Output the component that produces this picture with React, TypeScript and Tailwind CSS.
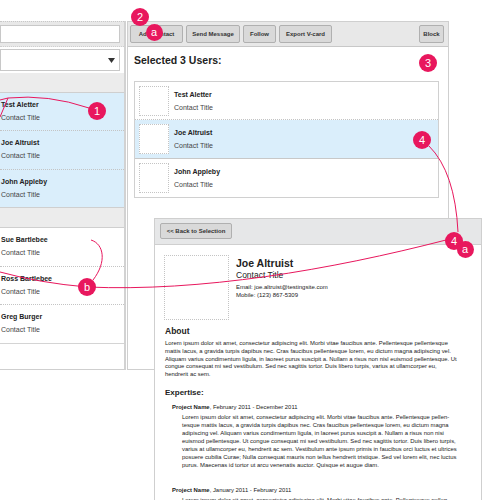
import React from "react";

const PINK = "#e8175d";

const aboutLines = [
  "Lorem ipsum dolor sit amet, consectetur adipiscing elit. Morbi vitae faucibus ante. Pellentesque pellentesque",
  "mattis lacus, a gravida turpis dapibus nec. Cras faucibus pellentesque lorem, eu dictum magna adipiscing vel.",
  "Aliquam varius condimentum ligula, in laoreet purus suscipit a. Nullam a risus non nisl euismod pellentesque. Ut",
  "congue consequat mi sed vestibulum. Sed nec sagittis tortor. Duis libero turpis, varius at ullamcorper eu,",
  "hendrerit ac sem.",
];

const projLines = [
  "Lorem ipsum dolor sit amet, consectetur adipiscing elit. Morbi vitae faucibus ante. Pellentesque pellen-",
  "tesque mattis lacus, a gravida turpis dapibus nec. Cras faucibus pellentesque lorem, eu dictum magna",
  "adipiscing vel. Aliquam varius condimentum ligula, in laoreet purus suscipit a. Nullam a risus non nisi",
  "euismod pellentesque. Ut congue consequat mi sed vestibulum. Sed nec sagittis tortor. Duis libero turpis,",
  "varius at ullamcorper eu, hendrerit ac sem. Vestibulum ante ipsum primis in faucibus orci luctus et ultrices",
  "posuere cubilia Curae; Nulla consequat mauris non tellus hendrerit tristique. Sed vel lorem elit, nec luctus",
  "purus. Maecenas id tortor ut arcu venenatis auctor. Quisque et augue diam.",
];

function LeftRow({ name, cls }: { name: string; cls: string }) {
  return (
    <div className={`pl-[1px] pt-[7px] border-b border-dotted border-[#c4c4c4] ${cls}`}>
      <div className="text-[7px] leading-[9px] font-bold text-[#222] whitespace-nowrap">{name}</div>
      <div className="mt-[4px] text-[7px] leading-[9px] text-[#444] whitespace-nowrap">Contact Title</div>
    </div>
  );
}

function SelRow({ name, cls }: { name: string; cls: string }) {
  return (
    <div className={`flex items-center pl-[4px] ${cls}`}>
      <div className="w-[30px] h-[30px] bg-white border border-dotted border-[#c4c4c4] shrink-0" />
      <div className="ml-[5px]">
        <div className="text-[7px] leading-[9px] font-bold text-[#222] whitespace-nowrap">{name}</div>
        <div className="mt-[4px] text-[7px] leading-[9px] text-[#444] whitespace-nowrap">Contact Title</div>
      </div>
    </div>
  );
}

function Btn({ label, w }: { label: string; w: string }) {
  return (
    <div
      className={`${w} h-[18px] shrink-0 flex items-center justify-center rounded-[2px] bg-[#d9d9d9] border border-[#b0b0b0] text-[6px] font-bold text-[#333] whitespace-nowrap`}
    >
      {label}
    </div>
  );
}

function Badge({ label, cls }: { label: string; cls: string }) {
  return (
    <div
      className={`absolute rounded-full bg-[#e8175d] text-white flex items-center justify-center leading-none ${cls}`}
    >
      {label}
    </div>
  );
}

export default function App() {
  return (
    <div
      className="relative w-[500px] h-[500px] overflow-hidden bg-white text-[#222]"
      style={{ fontFamily: '"Liberation Sans", Arial, sans-serif' }}
    >
      <div className="flex pt-[21px]">
        {/* Left panel */}
        <div className="w-[126px] h-[349px] border-r-2 border-[#d2d2d2] border-b border-b-[#cfcfcf] shrink-0 flex flex-col">
          <div className="h-[26px] bg-[#e8e8e8] border-t border-dotted border-[#c8c8c8] border-b border-b-[#cfcfcf] pt-[3px]">
            <div className="w-[120px] h-[18px] bg-white border border-[#c8c8c8]" />
          </div>
          <div className="h-[26px] pt-[2px]">
            <div className="w-[120px] h-[22px] bg-white border border-[#c8c8c8] flex items-center justify-end pr-[4px]">
              <svg width="7" height="5" viewBox="0 0 7 5">
                <path d="M0 0 L7 0 L3.5 5 Z" fill="#333" />
              </svg>
            </div>
          </div>
          <div className="h-[20px] bg-[#ececec] border-b border-[#cfcfcf]" />
          <LeftRow name="Test Aletter" cls="h-[38px] bg-[#daeefb]" />
          <LeftRow name="Joe Altruist" cls="h-[39px] bg-[#daeefb]" />
          <LeftRow name="John Appleby" cls="h-[38px] bg-[#daeefb] border-solid border-[#cfcfcf]" />
          <div className="h-[20px] bg-[#ececec] border-b border-[#cfcfcf]" />
          <LeftRow name="Sue Bartlebee" cls="h-[39px]" />
          <LeftRow name="Ross Bartlebee" cls="h-[38px]" />
          <LeftRow name="Greg Burger" cls="h-[39px] border-solid border-[#d4d4d4]" />
          <div className="flex-1" />
        </div>

        {/* Main panel */}
        <div className="ml-[1px] w-[322px] h-[349px] border border-[#cfcfcf] shrink-0 flex flex-col">
          <div className="h-[25px] bg-[#e8e8e8] border-b border-[#c8c8c8] pt-[3px] pl-[2px] pr-[4px] flex gap-[3px]">
            <Btn label="Add Contact" w="w-[53px]" />
            <Btn label="Send Message" w="w-[54px]" />
            <Btn label="Follow" w="w-[33px]" />
            <Btn label="Export V-card" w="w-[53px]" />
            <div className="ml-auto">
              <Btn label="Block" w="w-[25px]" />
            </div>
          </div>
          <div className="pl-[6px] pt-[7px] text-[10.5px] leading-[13px] font-bold text-[#222]">
            Selected 3 Users:
          </div>
          <div className="ml-[6px] mt-[14px] w-[305px] border border-[#d0d0d0] flex flex-col">
            <SelRow name="Test Aletter" cls="h-[38px] border-b border-dotted border-[#c4c4c4]" />
            <SelRow name="Joe Altruist" cls="h-[39px] bg-[#daeefb] border-b border-[#c8c8c8]" />
            <SelRow name="John Appleby" cls="h-[38px]" />
          </div>
        </div>
      </div>

      {/* Detail panel (overlapping window) */}
      <div className="absolute left-[154px] top-[218px] w-[328px] h-[300px] bg-white border border-[#cfcfcf]">
        <div className="h-[26px] bg-[#e6e7e8] border-b border-[#cfcfcf] pt-[4px] pl-[5px]">
          <div className="w-[72px] h-[16px] flex items-center justify-center rounded-[2px] bg-[#d9d9d9] border border-[#b0b0b0] text-[6px] font-bold text-[#333] whitespace-nowrap">
            &lt;&lt; Back to Selection
          </div>
        </div>
        <div className="pl-[9px] pt-[10px]">
          <div className="flex">
            <div className="w-[65px] h-[65px] border border-dotted border-[#c4c4c4] shrink-0" />
            <div className="ml-[7px]">
              <div className="mt-[2px] text-[10.5px] leading-[13px] font-bold text-[#222]">Joe Altruist</div>
              <div className="text-[8.5px] leading-[10px] text-[#222]">Contact Title</div>
              <div className="mt-[4px] text-[6px] leading-[7.5px] text-[#222] whitespace-nowrap">
                Email: joe.altruist@testingsite.com
              </div>
              <div className="text-[6px] leading-[7.5px] text-[#222] whitespace-nowrap">Mobile: (123) 867-5309</div>
            </div>
          </div>
          <div className="pl-[1px]">
            <div className="mt-[6px] text-[8.5px] leading-[10px] font-bold text-[#222]">About</div>
            <div className="mt-[4px] text-[5.9px] leading-[7.8px] text-[#222]">
              {aboutLines.map((l, i) => (
                <div key={i} className="whitespace-nowrap">{l}</div>
              ))}
            </div>
            <div className="mt-[9px] text-[8px] leading-[10px] font-bold text-[#222]">Expertise:</div>
            <div className="pl-[7px]">
              <div className="mt-[6px] text-[5.9px] leading-[7.8px] whitespace-nowrap">
                <span className="font-bold">Project Name</span>, February 2011 - December 2011
              </div>
              <div className="mt-[1px] pl-[10px] text-[5.9px] leading-[8px]">
                {projLines.map((l, i) => (
                  <div key={i} className="whitespace-nowrap">{l}</div>
                ))}
              </div>
              <div className="mt-[18px] text-[5.9px] leading-[7.8px] whitespace-nowrap">
                <span className="font-bold">Project Name</span>, January 2011 - February 2011
              </div>
              <div className="mt-[1px] pl-[10px] text-[5.9px] leading-[8px]">
                <div className="whitespace-nowrap">{projLines[0]}</div>
              </div>
            </div>
          </div>
        </div>
      </div>

      {/* Annotation curves */}
      <svg className="absolute inset-0 pointer-events-none" width="500" height="500" viewBox="0 0 500 500" fill="none">
        <g stroke={PINK} strokeWidth="1" fill="none">
          <path d="M0 117 L8 98 Q48 94 89 108" />
          <path d="M8 98 L0 100" />
          <path d="M429 146 Q455 172 458 232" />
          <path d="M0 272 Q40 283 87 287 C200 292 330 270 446 240" />
          <path d="M91 240 C104 244 107 262 93 280" />
        </g>
      </svg>

      <Badge label="2" cls="left-[131px] top-[8px] w-[18px] h-[18px] text-[11px]" />
      <Badge label="a" cls="left-[145.5px] top-[23.5px] w-[17px] h-[17px] text-[11px]" />
      <Badge label="1" cls="left-[88px] top-[102px] w-[18px] h-[18px] text-[11px]" />
      <Badge label="3" cls="left-[419px] top-[54px] w-[18px] h-[18px] text-[11px]" />
      <Badge label="4" cls="left-[413px] top-[131px] w-[18px] h-[18px] text-[11px]" />
      <Badge label="4" cls="left-[445px] top-[232px] w-[18px] h-[18px] text-[11px]" />
      <Badge label="a" cls="left-[456.5px] top-[240.5px] w-[17px] h-[17px] text-[11px]" />
      <Badge label="b" cls="left-[78px] top-[278px] w-[18px] h-[18px] text-[11px]" />
    </div>
  );
}
